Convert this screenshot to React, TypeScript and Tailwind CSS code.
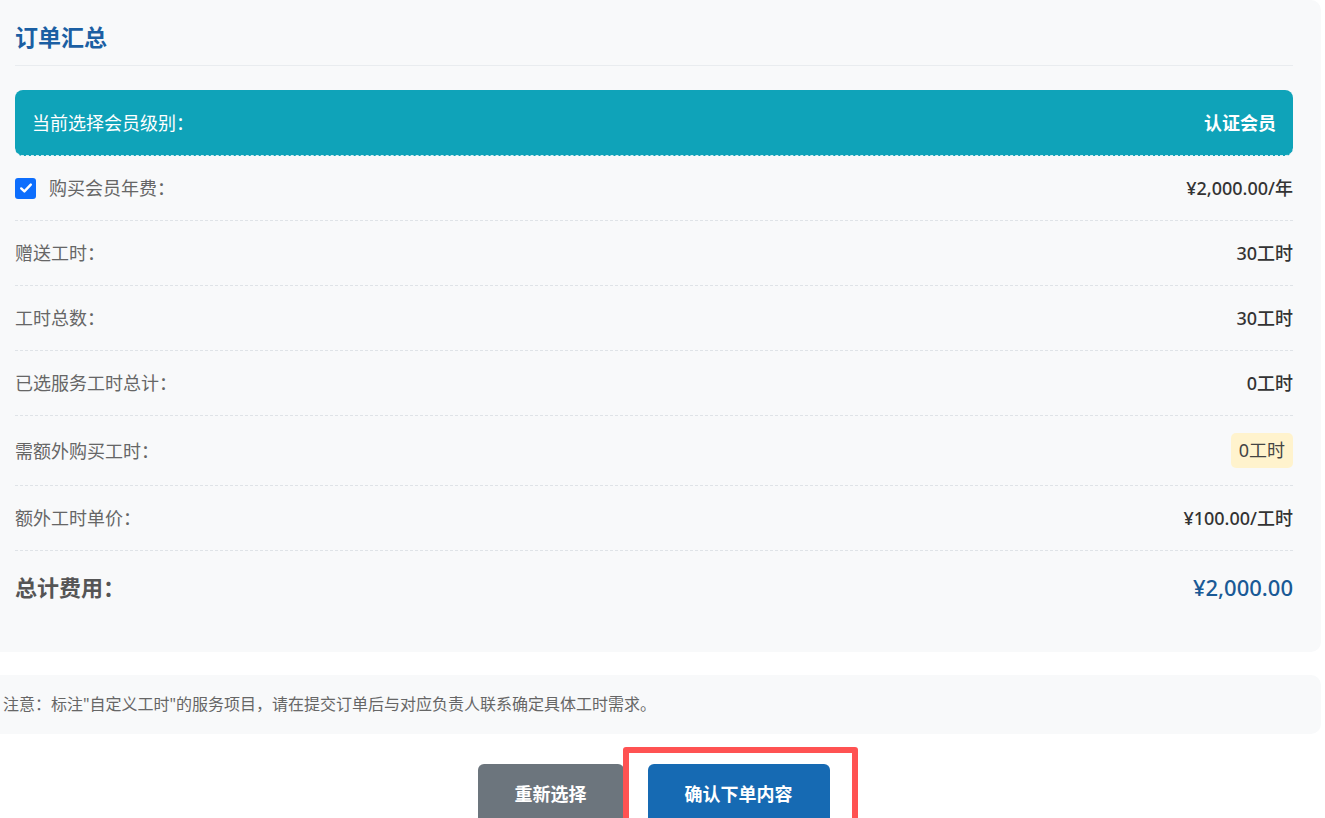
import React from 'react'

const rows: { label: string; value: string; badge?: boolean }[] = [
  { label: '赠送工时：', value: '30工时' },
  { label: '工时总数：', value: '30工时' },
  { label: '已选服务工时总计：', value: '0工时' },
  { label: '需额外购买工时：', value: '0工时', badge: true },
  { label: '额外工时单价：', value: '¥100.00/工时' },
]

function CheckBox() {
  return (
    <span className="flex h-[21px] w-[21px] items-center justify-center rounded-[3px] bg-[#0d6efd]">
      <svg viewBox="0 0 16 16" className="h-[16px] w-[16px]" fill="none">
        <path d="M3.2 8.4 6.4 11.4 12.8 4.6" stroke="white" strokeWidth="2.4" strokeLinecap="round" strokeLinejoin="round" />
      </svg>
    </span>
  )
}

export default function App() {
  return (
    <div className="min-h-screen overflow-hidden bg-white font-['Noto_Sans','Noto_Sans_CJK_SC',sans-serif]">
      <div className="ml-[-14px] w-[1335px]">
        <div className="rounded-[10px] bg-[#f8f9fa] pb-[28px] pl-[29px] pr-[28px] pt-[21px]">
          <h2 className="mb-[24px] border-b border-[#e9ecef] pb-[11px] text-[23px] font-bold leading-[33px] text-[#1b5fa3]">
            订单汇总
          </h2>

          <div className="flex items-center justify-between rounded-[8px] border-b border-dashed border-[#d7eef2] bg-[#0fa3b9] px-[17px] pb-[17px] pt-[18px] text-[18px] leading-[30px] text-white">
            <span>当前选择会员级别：</span>
            <span className="font-bold">认证会员</span>
          </div>

          <div className="flex items-center justify-between border-b border-dashed border-[#dfe3e7] py-[17px] text-[18px] leading-[30px]">
            <label className="flex items-center gap-[13px] text-[#666]">
              <CheckBox />
              <span>购买会员年费：</span>
            </label>
            <span className="font-medium text-[#333]">¥2,000.00/年</span>
          </div>

          {rows.map((r) => (
            <div
              key={r.label}
              className="flex items-center justify-between border-b border-dashed border-[#dfe3e7] py-[17px] text-[18px] leading-[30px]"
            >
              <span className="text-[#666]">{r.label}</span>
              {r.badge ? (
                <span className="rounded-[5px] bg-[#fff3cd] px-[8px] py-[4px] leading-[27px] text-[#444]">
                  {r.value}
                </span>
              ) : (
                <span className="font-medium text-[#333]">{r.value}</span>
              )}
            </div>
          ))}

          <div className="flex items-center justify-between py-[20px] text-[22px] leading-[33px]">
            <span className="font-bold text-[#555]">总计费用：</span>
            <span className="font-medium text-[#1a5a96]">¥2,000.00</span>
          </div>
        </div>

        <div className="mt-[23px] rounded-[10px] bg-[#f8f9fa] px-[17px] py-[17px] text-[16px] leading-[25px] text-[#666]">
          注意：标注"自定义工时"的服务项目，请在提交订单后与对应负责人联系确定具体工时需求。
        </div>

        <div className="mt-[30px] flex justify-center gap-[24px]">
          <button className="rounded-[6px] bg-[#6c757d] px-[37px] py-[17px] text-[18px] font-bold leading-[27px] text-white">
            重新选择
          </button>
          <div className="relative">
            <button className="rounded-[6px] bg-[#166ab3] px-[37px] py-[17px] text-[18px] font-bold leading-[27px] text-white">
              确认下单内容
            </button>
            <span className="pointer-events-none absolute -bottom-[17px] -left-[25px] -right-[28px] -top-[17px] rounded-[3px] border-[6px] border-[#ff5252]" />
          </div>
        </div>
      </div>
    </div>
  )
}
